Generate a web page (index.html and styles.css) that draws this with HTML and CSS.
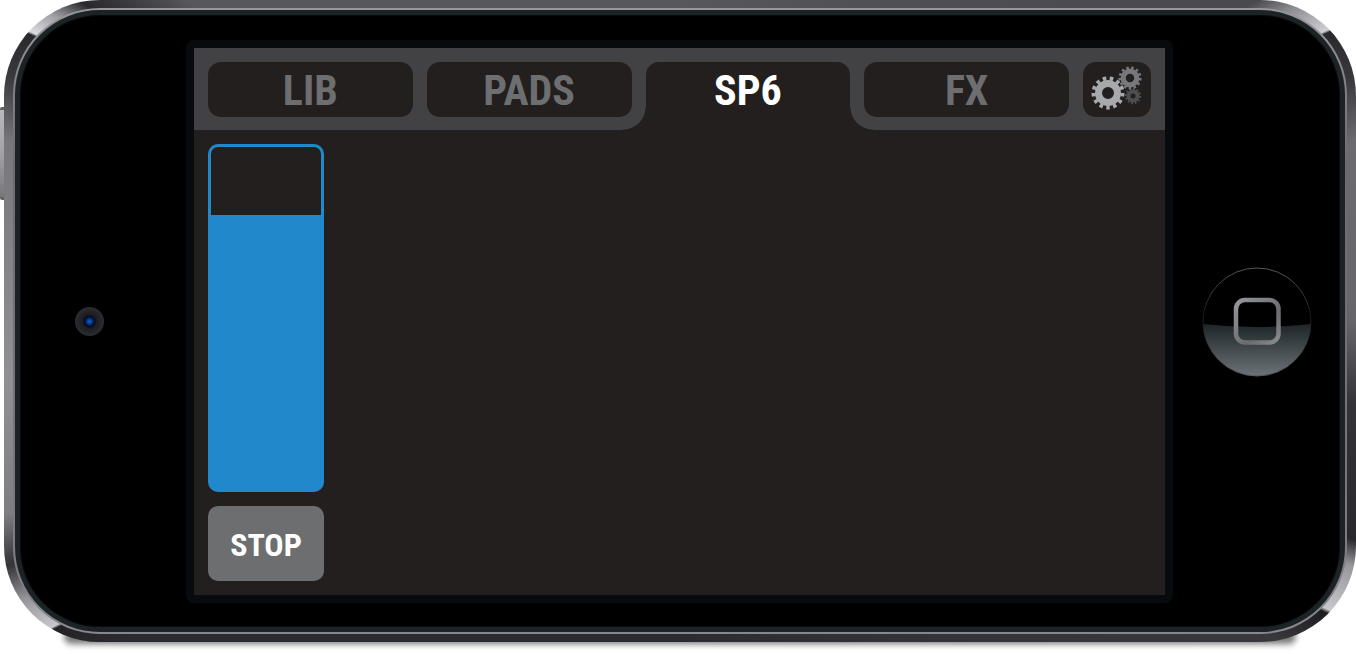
FILE: index.html
```html
<!DOCTYPE html>
<html lang="en">
<head>
	<meta charset="UTF-8">
	<title>SP6</title>
	<link rel="stylesheet" href="styles.css">
</head>
<body>
	<div class="phone">
		<div class="volume"></div>
		<div class="ring">
			<div class="glass">
				<div class="side-left">
					<div class="camera"></div>
				</div>
				<div class="bezel">
					<div class="screen">
						<nav class="tabs">
							<button type="button" class="tab">LIB</button>
							<button type="button" class="tab">PADS</button>
							<button type="button" class="tab active">SP6</button>
							<button type="button" class="tab">FX</button>
							<button type="button" class="settings" aria-label="Settings">
								<svg width="68" height="55" viewBox="0 0 68 55" fill="none">
									<g stroke="#4d4e50">
										<circle cx="50" cy="34" r="4.5" stroke-width="4"/>
										<circle cx="50" cy="34" r="7" stroke-width="2.4" pathLength="24" stroke-dasharray="1 1"/>
									</g>
									<g stroke="#77787b">
										<circle cx="47" cy="16" r="6.8" stroke-width="5.2"/>
										<circle cx="47" cy="16" r="10.2" stroke-width="2.8" pathLength="26" stroke-dasharray="1 1"/>
									</g>
									<g stroke="#a7a9ac">
										<circle cx="25" cy="31" r="9.5" stroke-width="7"/>
										<circle cx="25" cy="31" r="14.5" stroke-width="4" pathLength="26" stroke-dasharray="1 1"/>
									</g>
								</svg>
							</button>
						</nav>
						<div class="panel">
							<input type="range" class="fader" aria-label="Level" min="0" max="100" value="80">
							<button type="button" class="stop">STOP</button>
						</div>
					</div>
				</div>
				<div class="side-right">
					<button type="button" class="home" aria-label="Home">
						<svg width="110" height="110" viewBox="0 0 110 110">
							<defs>
								<linearGradient id="shine" x1="0" y1="0" x2="0" y2="1">
									<stop offset="0" stop-color="#1d2529"/>
									<stop offset="1" stop-color="#6c7376"/>
								</linearGradient>
								<linearGradient id="rim" x1="0" y1="0" x2="0" y2="1">
									<stop offset="0" stop-color="#55565a"/>
									<stop offset="0.45" stop-color="#18191b"/>
									<stop offset="1" stop-color="#54595c"/>
								</linearGradient>
								<linearGradient id="square" x1="0" y1="0" x2="1" y2="1">
									<stop offset="0" stop-color="#94969c"/>
									<stop offset="0.65" stop-color="#6a6b6f"/>
									<stop offset="1" stop-color="#888b8f"/>
								</linearGradient>
							</defs>
							<circle cx="55" cy="55" r="54" fill="#000"/>
							<path d="M1.04 57Q55 63 108.96 57A54 54 0 0 1 1.04 57Z" fill="url(#shine)"/>
							<circle cx="55" cy="55" r="54" fill="none" stroke="url(#rim)"/>
							<rect x="34" y="33" width="42.5" height="42.5" rx="9" fill="none" stroke="url(#square)" stroke-width="4.5"/>
						</svg>
					</button>
				</div>
			</div>
		</div>
	</div>
</body>
</html>
```
FILE: styles.css
```css
* { padding: 0; margin: 0; box-sizing: border-box; }
html { background: #fff; }
body { padding-bottom: 12px; }
button { border: none; font-family: "Liberation Sans Narrow", "Roboto Condensed", Roboto, sans-serif; font-weight: bold; cursor: pointer; }
svg { display: block; }

/* phone body */
.phone { position: relative; display: flex; min-height: calc(100vh - 12px); margin-left: 4px; padding: 8px 9px; border-radius: 96px;
	background: conic-gradient(
		#58575b 0deg, #4a494d 61deg, #8d8c91 63deg, #d0cfd4 65.8deg,
		#29282c 66deg, #38373b 70deg, #6c6b70 75deg, #66656a 90deg, #343338 97deg, #29282c 108deg, #97969b 110deg, #c8c7cc 114deg,
		#1d1c20 114.3deg, #38373c 118deg, #2c2b30 180deg, #2c2b30 240deg, #222125 243.8deg,
		#c8c7cc 244deg, #96959a 247deg, #343337 250deg, #7e7d82 254deg, #919095 265deg, #77767b 285deg, #3a393d 290deg, #29282c 293.8deg,
		#dcdbe0 294deg, #a09fa4 296deg, #29282c 298deg, #58575b 303deg, #58575b 360deg); }
.phone::after { content: ""; position: absolute; z-index: -1; left: 60px; right: 60px; bottom: -2px; height: 14px; border-radius: 14px; background: #777; filter: blur(3px); }
.volume { position: absolute; left: -4px; top: 107px; width: 4px; height: 93px; border-radius: 2px 0 0 2px; border-top: 3px solid #626166; border-bottom: 3px solid #626166; background: linear-gradient(#b9b8bc, #a3a2a7 50%, #77767b); }
.ring { flex: 1; display: flex; padding: 2px; border-radius: 87px; background: linear-gradient(#98979b, #6c6b70 25%, #77767b 75%, #88878c); }
.glass { flex: 1; display: flex; padding: 25px 0 24px; border: 5px solid #1b2326; border-radius: 85px; background: #000; box-shadow: inset 0 0 2px #1b2326; }

.side-left { width: 166px; display: flex; align-items: center; padding-left: 55px; }
.camera { width: 29px; height: 29px; border-radius: 50%; background: radial-gradient(circle, #0868c8 0, #062f78 3px, #030b22 5px, #1b1d20 7px, #2a2c2f 14px); }
.side-right { width: 167px; display: flex; align-items: center; justify-content: center; }
.home { width: 110px; height: 110px; border-radius: 50%; background: #000; }

/* screen */
.bezel { flex: 1; display: flex; padding: 8px; border-radius: 8px; background: #070b0d; }
.screen { flex: 1; display: flex; flex-direction: column; background: #231f1e; }
.tabs { display: flex; gap: 14px; height: 82px; padding: 14px 14px 13px; background: #424143; }
.tab { position: relative; flex: 1; padding-top: 2px; border-radius: 13px; background: #231f1e; color: #6d6e70; font-size: 42px; line-height: 53px; }
.tab.active { height: 68px; padding-bottom: 13px; border-radius: 13px 13px 0 0; color: #fff; }
.tab.active::before, .tab.active::after { content: ""; position: absolute; bottom: 0; width: 23px; height: 23px; }
.tab.active::before { right: 100%; background: radial-gradient(circle at 0 0, transparent 22px, #231f1e 23px); }
.tab.active::after { left: 100%; background: radial-gradient(circle at 100% 0, transparent 22px, #231f1e 23px); }
.settings { width: 68px; border-radius: 13px; background: #231f1e; }

.panel { flex: 1; display: flex; flex-direction: column; align-items: flex-start; gap: 14px; padding: 14px; }
.fader { flex: 1; width: 116px; min-height: 200px; appearance: none; writing-mode: vertical-lr; direction: rtl; border: 3px solid #2188cb; border-radius: 10px; background: linear-gradient(to top, #2188cb 80%, #231f1e 80%); }
.fader::-webkit-slider-thumb { appearance: none; width: 110px; height: 2px; background: transparent; }
.stop { width: 116px; height: 75px; padding-top: 2px; border-radius: 10px; background: #6d6e70; color: #fff; font-size: 32px; }
```
